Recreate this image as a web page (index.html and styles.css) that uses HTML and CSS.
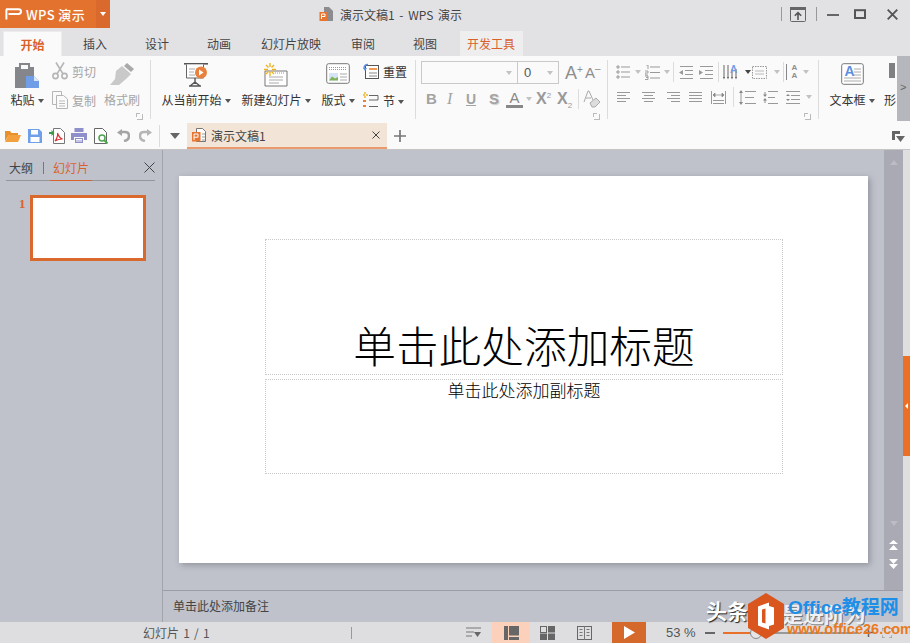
FILE: index.html
```html
<!DOCTYPE html>
<html lang="zh">
<head>
<meta charset="utf-8">
<title>演示文稿1 - WPS 演示</title>
<link rel="stylesheet" href="styles.css">
</head>
<body>
<div class="app">
  <header class="titlebar">
    <div class="brand">
      <svg class="ic brand-mark" width="17" height="12" viewBox="0 0 17 12"><path d="M1 1.200h12.500q2.500 0 2.500 2.400t-2.500 2.400H3.500M1.400 1.200V11.500" fill="none" stroke="#fff" stroke-width="2"/></svg>
      <span class="brand-name">WPS 演示</span>
    </div>
    <div class="brand-drop"><i class="caret caret-white"></i></div>
    <div class="doc-title">
      <svg class="ic" width="15" height="16" viewBox="0 0 15 16"><path d="M5 1h5l4 4v10H5z" fill="#8b8b90"/><rect x="0.500" y="6" width="8" height="9" fill="#e8752f"/><path d="M2.500 13V8h3.500v2.500H2.500" fill="none" stroke="#fff"/></svg>
      <span>演示文稿1 - WPS 演示</span>
    </div>
    <div class="win-ctrls">
      <i class="win-sep"></i>
      <svg class="ic" width="16" height="15" viewBox="0 0 16 15"><rect x=".5" y=".5" width="15" height="14" rx="1" fill="none" stroke="#666"/><rect x="0" y="0" width="16" height="3" fill="#666"/><path d="M8 13V6M4.800 8.800 8 5.600l3.200 3.200" fill="none" stroke="#555" stroke-width="1.600"/></svg>
      <i class="win-sep win-sep-b"></i>
      <svg class="ic win-min" width="12" height="12" viewBox="0 0 12 12"><rect y="6" width="12" height="2" fill="#666"/></svg>
      <svg class="ic win-max" width="12" height="10" viewBox="0 0 12 10"><rect x="1" y="1.200" width="10" height="7.800" fill="none" stroke="#555" stroke-width="2"/></svg>
      <svg class="ic win-close" width="11" height="11" viewBox="0 0 11 11"><path d="M.7.700l9.600 9.600M10.300.700.700 10.300" stroke="#555" stroke-width="1.900"/></svg>
    </div>
  </header>

  <nav class="tabs">
    <span class="tab tab-active">开始</span>
    <span class="tab">插入</span>
    <span class="tab">设计</span>
    <span class="tab">动画</span>
    <span class="tab tab-wide">幻灯片放映</span>
    <span class="tab">审阅</span>
    <span class="tab">视图</span>
    <span class="tab tab-dev">开发工具</span>
  </nav>

  <section class="ribbon">
    <div class="group g1">
      <div class="big w34">
        <div class="big-ic">
          <svg class="ic" width="24" height="25" viewBox="0 0 24 25"><path d="M0 4h4V0h11v4h4v21H0z" fill="#85868b"/><rect x="6" y="2" width="7" height="4" fill="#fafafa"/><path d="M11 13h8l5 5v7H11z" fill="#6f9de8"/><path d="M19 13v5h5" fill="#dbe6f8"/></svg>
        </div>
        <span class="lbl">粘贴<i class="caret"></i></span>
      </div>
      <div class="smalls ml8">
        <div class="small muted">
          <svg class="ic" width="16" height="18" viewBox="0 0 16 18"><g fill="none" stroke="#b5b5b5" stroke-width="1.600"><circle cx="3.500" cy="14" r="2.600"/><circle cx="12.500" cy="14" r="2.600"/><path d="M5 11.800 12 .5M11 11.800 4 .5"/></g></svg>
          <span>剪切</span>
        </div>
        <div class="small muted">
          <svg class="ic" width="16" height="18" viewBox="0 0 16 18"><g fill="#fafafa" stroke="#b5b5b5"><path d="M.5.500h9v13h-9z"/><path d="M4.500 4.500h7l4 3.500v9.500h-11z"/></g><path d="M7 10h6M7 12.500h6M7 15h6" stroke="#bdbdbd"/></svg>
          <span>复制</span>
        </div>
      </div>
      <div class="big w36 ml8 muted">
        <div class="big-ic">
          <svg class="ic" width="24" height="23" viewBox="0 0 24 23"><path d="M17 0l7 6-3 3-7-6z" fill="#a9a9a9"/><path d="M12 3l9 8-5 5L9 22H0l5-6 1-8z" fill="#c9c9c9"/></svg>
        </div>
        <span class="lbl">格式刷</span>
      </div>
      <i class="launcher l1"></i>
    </div>
    <i class="sep"></i>

    <div class="group g2">
      <div class="big w70">
        <div class="big-ic">
          <svg class="ic" width="24" height="24" viewBox="0 0 24 24"><path d="M0 .8h24" stroke="#555" stroke-width="1.600"/><path d="M2.500 1.500V15h17V1.500" fill="#fff" stroke="#666"/><path d="M5 6h6M5 9h5M5 12h6" stroke="#aaa"/><path d="M11 15v6M5 23h12M11 19l-5 4M11 19l5 4" stroke="#555" stroke-width="1.400" fill="none"/><circle cx="17" cy="9.500" r="6" fill="#e8813d"/><path d="M15 6.500v6l4.500-3z" fill="#fff"/></svg>
        </div>
        <span class="lbl">从当前开始<i class="caret"></i></span>
      </div>
      <div class="big w70 ml10">
        <div class="big-ic">
          <svg class="ic" width="24" height="24" viewBox="0 0 24 24"><path d="M1 8h22v15H1z" fill="#fff" stroke="#777"/><path d="M11 10h10" stroke="#999" stroke-dasharray="1 1"/><path d="M5 14h14M5 17h14M5 20h10" stroke="#aaa"/><path d="M6 0v4M6 9v4M0 6.500h4M8 6.500h4M2 2l2.500 2.500M10 2 7.500 4.500M2 11l2.500-2.500M10 11 7.500 8.500" stroke="#efb21f" stroke-width="1.400"/></svg>
        </div>
        <span class="lbl">新建幻灯片<i class="caret"></i></span>
      </div>
      <div class="big w34 ml10">
        <div class="big-ic">
          <svg class="ic" width="24" height="21" viewBox="0 0 24 21"><rect x=".7" y=".7" width="22.600" height="19.600" rx="2" fill="#fff" stroke="#777"/><path d="M3 4.500h18M3 6.500h18" stroke="#999" stroke-dasharray="1 1"/><rect x="3" y="10" width="9" height="7.500" fill="#d6e4f5"/><path d="M3 17.500l3-4 3 2 3-1.500v3.500z" fill="#7fb45c"/><path d="M14 11h7M14 14h7M14 17h7" stroke="#aaa"/></svg>
        </div>
        <span class="lbl">版式<i class="caret"></i></span>
      </div>
      <div class="smalls ml8 dark">
        <div class="small">
          <svg class="ic" width="16" height="16" viewBox="0 0 16 16"><rect x="2.500" y="2.500" width="13" height="13" fill="#fff" stroke="#555"/><path d="M6 6h8" stroke="#ee9a5b" stroke-width="2"/><path d="M6 10h8M6 13h8" stroke="#888"/><path d="M5 1.500Q1 1.500 1 5.500" fill="none" stroke="#5d8fe0" stroke-width="1.500"/><path d="M0 5h4L2 8z" fill="#5d8fe0"/></svg>
          <span>重置</span>
        </div>
        <div class="small">
          <svg class="ic" width="16" height="16" viewBox="0 0 16 16"><path d="M6 3.500h9v4.500H6M6 14.500h9" fill="none" stroke="#666"/><path d="M2 0v2M2 4v2M0 3h2M3 3h2" stroke="#efb21f" stroke-width="1.400"/><rect y="8" width="3" height="2" fill="#e8813d"/><rect y="13" width="3" height="2" fill="#e8813d"/></svg>
          <span>节<i class="caret"></i></span>
        </div>
      </div>
    </div>
    <i class="sep"></i>

    <div class="group g3">
      <div class="font-row">
        <div class="combo combo-name"><i class="caret caret-light"></i></div>
        <div class="combo combo-size"><span>0</span><i class="caret caret-light"></i></div>
        <span class="grow-a">A<sup>+</sup></span>
        <span class="shrink-a">A<sup>–</sup></span>
      </div>
      <div class="fmt-row">
        <b class="f fb">B</b>
        <i class="f fi">I</i>
        <span class="f fu">U</span>
        <span class="f fs">S</span>
        <span class="f fa">A</span><i class="caret caret-light"></i>
        <span class="f fx">X<sup>2</sup></span>
        <span class="f fx2">X<sub>2</sub></span>
        <i class="mini-sep"></i>
        <svg class="ic" width="18" height="18" viewBox="0 0 18 18"><path d="M1 12 5 1h1l4 9M3 8h5" fill="none" stroke="#aaa"/><path d="M7 13l6-5 4 4-5 5H9z" fill="#ddd" stroke="#aaa"/></svg>
      </div>
      <i class="launcher l3"></i>
    </div>
    <i class="sep"></i>

    <div class="group g4">
      <div class="para-row r1">
        <svg class="ic" width="14" height="14" viewBox="0 0 14 14"><path d="M5 2h9M5 7h9M5 12h9" stroke="#999"/><path d="M0 2h4M2 0v4M0 7h4M2 5v4M0 12h4M2 10v4" stroke="#999"/></svg>
        <i class="caret caret-light m5"></i>
        <svg class="ic m4" width="15" height="15" viewBox="0 0 15 15"><path d="M5 2h10M5 7.500h10M5 13h10" stroke="#999"/><path d="M1 0h2v4M0 6h3v2H0v2h3M0 11h3v3.500H0M1 12.500h2" fill="none" stroke="#999" stroke-width=".9"/></svg>
        <i class="caret caret-light m4"></i>
        <i class="mini-sep s-a"></i>
        <svg class="ic m5" width="14" height="13" viewBox="0 0 14 13"><path d="M1 .5h13M6 4.500h8M6 8.500h8M1 12.500h13" stroke="#999"/><path d="M0 6.500 4 4v5z" fill="#999"/></svg>
        <svg class="ic m6" width="14" height="13" viewBox="0 0 14 13"><path d="M1 .5h13M6 4.500h8M6 8.500h8M1 12.500h13" stroke="#999"/><path d="M4 6.500 0 4v5z" fill="#999"/></svg>
        <i class="mini-sep s-b"></i>
        <svg class="ic m4" width="16" height="15" viewBox="0 0 16 15"><path d="M1 0v13M5 0v13M9 4v9M13 4v9" stroke="#666"/><path d="M0 12h2l-1 2.500zM4 12h2l-1 2.500zM8 12h2l-1 2.500zM12 12h2l-1 2.500z" fill="#666"/><text x="7" y="8" class="svg-a">A</text></svg>
        <i class="caret caret-dark m6"></i>
        <svg class="ic m1" width="15" height="13" viewBox="0 0 15 13"><rect x=".5" y=".5" width="14" height="12" fill="none" stroke="#999" stroke-dasharray="1.500 1"/><path d="M3 5h9M3 8h9" stroke="#bbb"/></svg>
        <i class="caret caret-light m7"></i>
        <i class="mini-sep s-c"></i>
        <div class="stack-a m2"><span>A</span><span>A</span></div>
        <i class="caret caret-light m4"></i>
      </div>
      <div class="para-row r2">
        <svg class="ic" width="13" height="12" viewBox="0 0 13 12"><path d="M0 1.500h13M0 4.500h9M0 7.500h13M0 10.500h9" stroke="#999"/></svg>
        <svg class="ic a2" width="13" height="12" viewBox="0 0 13 12"><path d="M0 1.500h13M2 4.500h9M0 7.500h13M2 10.500h9" stroke="#999"/></svg>
        <svg class="ic a2" width="13" height="12" viewBox="0 0 13 12"><path d="M0 1.500h13M4 4.500h9M0 7.500h13M4 10.500h9" stroke="#999"/></svg>
        <svg class="ic a3" width="13" height="12" viewBox="0 0 13 12"><path d="M0 1.500h13M0 4.500h13M0 7.500h13M0 10.500h13" stroke="#999"/></svg>
        <svg class="ic a3" width="15" height="13" viewBox="0 0 15 13"><path d="M.5 0v13M14.500 0v13M2 9.500h11M2 12.500h11" stroke="#999"/><path d="M2 4h11M2 4l2-2v4zM13 4l-2-2v4z" stroke="#888" fill="#888" stroke-width=".7"/></svg>
        <i class="mini-sep s-d"></i>
        <svg class="ic a5" width="17" height="15" viewBox="0 0 17 15"><path d="M6 1.500h11M6 7.500h9M6 13.500h11" stroke="#999"/><path d="M2 2v11" stroke="#999"/><path d="M0 3l2-3 2 3zM0 12l2 3 2-3z" fill="#888"/></svg>
        <svg class="ic a6" width="15" height="15" viewBox="0 0 15 15"><path d="M5 1.500h10M5 7.500h7M5 13.500h10" stroke="#999"/><path d="M0 4.500h4L2 7zM0 10.500h4L2 8z" fill="#888"/><path d="M2 2v3M2 10v3" stroke="#888"/></svg>
        <svg class="ic a6b" width="14" height="13" viewBox="0 0 14 13"><path d="M0 .5h14M5 4.500h9M5 8.500h9M0 12.500h14" stroke="#999"/><path d="M0 5h4L2 3zM0 8h4L2 10z" fill="#888"/></svg>
        <i class="caret caret-light m6"></i>
      </div>
      <i class="launcher l4"></i>
    </div>
    <i class="sep"></i>

    <div class="group g5">
      <div class="big w46">
        <div class="big-ic">
          <svg class="ic" width="23" height="22" viewBox="0 0 23 22"><rect x=".7" y=".7" width="21.600" height="20.600" rx="2" fill="#fff" stroke="#777"/><text x="3.500" y="13" class="svg-a3">A</text><path d="M13 6h7M13 9h7M13 12h7M3 15h17M3 18h17" stroke="#aaa"/></svg>
        </div>
        <span class="lbl">文本框<i class="caret"></i></span>
      </div>
      <div class="big clip ml10">
        <div class="big-ic"><b class="shape-bar"></b></div>
        <span class="lbl">形</span>
      </div>
    </div>
    <div class="collapse-strip"><span>&gt;</span></div>
  </section>

  <section class="quick">
    <svg class="ic q0" width="16" height="12" viewBox="0 0 16 12"><path d="M0 1h5l1.500 2H13v2H4L0 11z" fill="#e8902c"/><path d="M3.500 5H16l-3 7H0z" fill="#f2a13c"/></svg>
    <svg class="ic q1" width="14" height="14" viewBox="0 0 14 14"><path d="M0 0h11l3 3v11H0z" fill="#6f9fe8"/><rect x="3" y="1" width="7" height="4.500" fill="#fff"/><rect x="2.500" y="8" width="9" height="5" fill="#fff"/></svg>
    <svg class="ic q2" width="16" height="16" viewBox="0 0 16 16"><path d="M4.500.5h7l4 4v11h-11z" fill="#fff" stroke="#777"/><path d="M6 13c2-2 3-6 2.500-8 1 3 2 5 5 6-3 0-5 .5-7.500 2z" fill="none" stroke="#d33" stroke-width="1.200"/><path d="M0 4h2.500V2l3 3-3 3V6H0z" fill="#3a9a4a"/></svg>
    <svg class="ic q3" width="16" height="15" viewBox="0 0 16 15"><path d="M3.500 0h9v4h-9z" fill="#8f8fc9"/><path d="M0 5h16v7h-3V9H3v3H0z" fill="#8f8fc9"/><path d="M4 10h8v5H4z" fill="#8f8fc9"/><path d="M5 11.500h6M5 13h6" stroke="#fff"/></svg>
    <svg class="ic q4" width="15" height="16" viewBox="0 0 15 16"><path d="M.5.500h8l4 4v11H.5z" fill="#fff" stroke="#666"/><circle cx="8" cy="10" r="3" fill="none" stroke="#4da64d" stroke-width="1.500"/><path d="M10 12l3.500 3.500" stroke="#4da64d" stroke-width="2"/></svg>
    <svg class="ic q5" width="13" height="13" viewBox="0 0 13 13"><path d="M4 3h4q4 0 4 4t-5 5" fill="none" stroke="#a5a5a5" stroke-width="2.500"/><path d="M5 0v7L0 3.500z" fill="#a5a5a5"/></svg>
    <svg class="ic q6" width="13" height="13" viewBox="0 0 13 13"><path d="M9 3H5Q1 3 1 7t5 5" fill="none" stroke="#b5b5b5" stroke-width="2.500"/><path d="M8 0v7l5-3.500z" fill="#b5b5b5"/></svg>
    <i class="quick-sep"></i>
    <i class="caret caret-big"></i>
    <div class="doc-tab">
      <svg class="ic" width="14" height="14" viewBox="0 0 14 14"><path d="M4.500.5h6l3 3v10h-9z" fill="#fff" stroke="#777"/><rect y="4" width="8.500" height="9.500" fill="#e8752f"/><path d="M2 12V6h4v3.200H2" fill="none" stroke="#fff"/><path d="M10 6h3M10 9h3M10 12h3" stroke="#999"/></svg>
      <span class="doc-tab-name">演示文稿1</span>
      <svg class="ic doc-tab-x" width="8" height="8" viewBox="0 0 8 8"><path d="M.5.500l7 7M7.500.500l-7 7" stroke="#444"/></svg>
    </div>
    <svg class="ic q-plus" width="12" height="12" viewBox="0 0 12 12"><path d="M6 0v12M0 6h12" stroke="#777" stroke-width="1.700"/></svg>
    <svg class="ic q-end" width="13" height="12" viewBox="0 0 13 12"><path d="M0 0h8v3H3v6H0z" fill="#666"/><path d="M4 5h9l-4.500 6z" fill="#666"/></svg>
  </section>

  <main class="workspace">
    <aside class="sidebar">
      <div class="side-tabs">
        <span class="side-tab">大纲</span>
        <i class="side-sep"></i>
        <span class="side-tab side-on">幻灯片</span>
        <svg class="ic side-x" width="11" height="11" viewBox="0 0 11 11"><path d="M.5.500l10 10M10.500.500l-10 10" stroke="#444"/></svg>
      </div>
      <div class="thumb-row">
        <span class="thumb-num">1</span>
        <div class="thumb"></div>
      </div>
    </aside>
    <div class="center">
      <div class="edit-row">
        <div class="canvas">
          <div class="slide">
            <div class="ph ph-title">单击此处添加标题</div>
            <div class="ph ph-sub">单击此处添加副标题</div>
          </div>
        </div>
        <div class="vscroll">
          <i class="tri tri-up"></i>
          <i class="tri tri-down"></i>
          <svg class="ic dbl" width="9" height="10" viewBox="0 0 9 10"><path d="M4.500 0 9 4H0zM4.500 5 9 10H0z" fill="#fff"/></svg>
          <svg class="ic dbl2" width="9" height="10" viewBox="0 0 9 10"><path d="M4.500 5 9 0H0zM4.500 10 9 5H0z" fill="#fff"/></svg>
        </div>
      </div>
      <div class="notes">单击此处添加备注</div>
    </div>
    <div class="rail">
      <div class="rail-handle"><i></i></div>
    </div>
  </main>

  <footer class="status">
    <span class="st-page">幻灯片 1 / 1</span>
    <i class="st-sep"></i>
    <svg class="ic st-notes" width="15" height="11" viewBox="0 0 15 11"><path d="M0 1h15M0 5h8M0 9h6" stroke="#777"/><path d="M8 5h7l-3.500 5z" fill="#666"/></svg>
    <div class="st-view">
      <svg class="ic" width="15" height="14" viewBox="0 0 15 14"><rect width="4" height="14" fill="#666"/><rect x="5" width="10" height="9.500" fill="#666"/><rect x="5" y="11" width="10" height="3" fill="#666"/></svg>
    </div>
    <svg class="ic st-grid" width="15" height="14" viewBox="0 0 15 14"><rect x=".5" y=".5" width="6" height="6" fill="none" stroke="#666"/><rect x="8" width="7" height="6.500" fill="#666"/><rect y="7.500" width="7" height="6.500" fill="#666"/><rect x="8" y="7.500" width="7" height="6.500" fill="#666"/></svg>
    <svg class="ic st-read" width="15" height="14" viewBox="0 0 15 14"><rect x=".5" y=".5" width="14" height="13" fill="none" stroke="#666"/><path d="M7.500 0v14M2.500 3.500h3M2.500 6.500h3M2.500 9.500h3M9.500 3.500h3M9.500 6.500h3M9.500 9.500h3" stroke="#777"/></svg>
    <div class="st-play"><svg class="ic" width="11" height="13" viewBox="0 0 11 13"><path d="M0 0v13l11-6.500z" fill="#fff"/></svg></div>
    <span class="st-zoom">53 %</span>
    <i class="st-minus"></i>
    <div class="slider"><i class="slider-on"></i><i class="slider-knob"></i></div>
    <svg class="ic st-plus" width="9" height="9" viewBox="0 0 9 9"><path d="M4.500 0v9M0 4.500h9" stroke="#666" stroke-width="1.500"/></svg>
    <svg class="ic st-fit" width="10" height="10" viewBox="0 0 10 10"><path d="M0 3V0h3M7 0h3v3M0 7v3h3M7 10h3V7" fill="none" stroke="#888"/></svg>
  </footer>

  <div class="watermark">
    <span class="wm-head">头条</span>
    <span class="wm-tail">是进阶为</span>
    <svg class="wm-logo" width="36" height="46" viewBox="0 0 36 46"><path d="M18 0l18 11v24L18 46 0 35V11z" fill="#d9561f"/><path d="M10 13.500 21 9.500v27l-11-4zM21 13v20l5-1.500v-17z" fill="#fff"/><path d="M14 16.500l3.500-1v15l-3.500-1z" fill="#d9561f"/></svg>
    <span class="wm-blue">Office教程网</span>
    <span class="wm-url">www.office26.com</span>
  </div>
</div>
</body>
</html>
```

FILE: styles.css
```css
* { box-sizing: border-box; }
html, body { margin: 0; padding: 0; }
body {
  width: 910px; height: 643px; overflow: hidden;
  font-family: "Noto Sans CJK SC", "Liberation Sans", sans-serif;
  font-size: 12px; color: #333; background: #e2e2e4;
}
i { font-style: normal; }
.app { position: relative; width: 910px; height: 643px; display: flex; flex-direction: column; overflow: hidden; }
.ic { display: block; flex: none; }

/* carets */
.caret { display: inline-block; width: 0; height: 0; border-left: 3.500px solid transparent; border-right: 3.500px solid transparent; border-top: 4px solid #555; margin-left: 3px; vertical-align: 2px; flex: none; }
.caret-white { border-top-color: #fff; margin: 0; }
.caret-light { border-top-color: #c2c2c2; }
.caret-dark { border-top-color: #444; }
.caret-big { border-left-width: 5px; border-right-width: 5px; border-top: 6px solid #666; margin: 0 0 0 10px; }

/* title bar */
.titlebar { height: 31px; display: flex; align-items: flex-start; flex: none; background: #e2e2e4; }
.brand { width: 96px; height: 28px; background: #e4722f; display: flex; align-items: center; padding-left: 5px; color: #fff; }
.brand-name { margin-left: 4px; font-size: 13px; font-weight: 500; letter-spacing: .4px; white-space: nowrap; }
.brand-drop { width: 14px; height: 28px; background: #d9692c; display: flex; align-items: center; justify-content: center; }
.doc-title { margin-left: 209px; height: 28px; width: 150px; display: flex; align-items: center; gap: 6px; color: #444; white-space: nowrap; word-spacing: 2px; }
.win-ctrls { margin-left: 312px; height: 28px; display: flex; align-items: center; }
.win-sep { width: 1px; height: 14px; background: #999; margin-right: 8px; }
.win-sep-b { margin: 0 0 0 10px; }
.win-min { margin-left: 10px; }
.win-max { margin-left: 15px; }
.win-close { margin-left: 21px; }

/* tabs */
.tabs { height: 25px; display: flex; flex: none; padding-left: 3px; background: #e2e2e4; }
.tab { height: 25px; line-height: 25px; padding: 0 19px; color: #444; white-space: nowrap; }
.tab-active { width: 59px; padding: 0; text-align: center; margin-right: 2px; background: #fafafa; color: #d9622a; font-weight: 700; border: 1px solid #ececec; border-bottom: 0; }
.tab-wide { padding: 0 11px; }
.tab-dev { margin-left: 4px; padding: 0 8px 0 7px; background: #eeeeef; color: #d9622a; }

/* ribbon */
.ribbon { height: 66px; display: flex; flex: none; align-items: flex-start; background: #fafafa; position: relative; }
.group { position: relative; height: 66px; display: flex; flex: none; }
.sep { width: 1px; height: 59px; margin-top: 4px; background: #dcdcdc; flex: none; }
.g1 { width: 150px; padding-left: 10px; }
.g2 { width: 264px; padding-left: 10px; }
.g3 { width: 191px; flex-direction: column; padding-left: 5px; }
.g4 { width: 210px; flex-direction: column; padding-left: 8px; }
.g5 { width: 78px; padding-left: 10px; overflow: hidden; }
.big { display: flex; flex-direction: column; align-items: center; padding-top: 7px; flex: none; white-space: nowrap; }
.big-ic { height: 30px; flex: none; }
.lbl { line-height: 14px; height: 14px; display: block; white-space: nowrap; }
.w34 { width: 34px; } .w36 { width: 36px; } .w46 { width: 46px; } .w70 { width: 70px; }
.ml8 { margin-left: 8px; } .ml10 { margin-left: 10px; }
.muted { color: #a5a5a5; }
.smalls { display: flex; flex-direction: column; gap: 11px; padding-top: 6px; flex: none; }
.small { display: flex; align-items: center; gap: 4px; height: 18px; white-space: nowrap; }
.launcher { position: absolute; width: 6px; height: 6px; border: 1px solid #bbb; border-top: 0; border-left: 0; box-shadow: -2px -2px 0 -1px #bbb; }
.l1 { left: 137px; top: 58px; }
.l3 { left: 178px; top: 58px; }
.l4 { left: 197px; top: 58px; }
.clip { width: 12px; align-items: flex-start; margin-left: 9px; }
.shape-bar { display: block; width: 6px; height: 15px; background: #808083; margin-left: 5px; }
.collapse-strip { position: absolute; left: 897px; top: 0; width: 13px; height: 65px; background: #b5b7bd; color: #666; line-height: 14px; padding: 24px 0 0 3px; font-size: 11px; font-family: "Liberation Sans", sans-serif; }

.font-row { display: flex; align-items: center; height: 23px; margin-top: 5px; }
.combo { height: 23px; border: 1px solid #c9c9c9; display: flex; align-items: center; justify-content: flex-end; padding-right: 5px; flex: none; }
.combo-name { width: 97px; }
.combo-size { width: 41px; border-left: 0; justify-content: space-between; padding-left: 6px; color: #555; font-family: "Liberation Sans", sans-serif; font-size: 13px; }
.grow-a, .shrink-a { color: #8e8e8e; font-family: "Liberation Sans", sans-serif; line-height: 20px; flex: none; }
.grow-a { font-size: 18px; margin-left: 6px; width: 20px; }
.shrink-a { font-size: 15px; width: 18px; }
.grow-a sup, .shrink-a sup { font-size: 10px; vertical-align: 6px; line-height: 0; }
.fmt-row { display: flex; align-items: center; height: 18px; margin-top: 6px; padding-left: 5px; color: #a3a3a3; font-family: "Liberation Sans", sans-serif; }
.f { font-size: 15px; line-height: 18px; flex: none; }
.fb { width: 21px; font-weight: 700; }
.fi { width: 19px; font-family: "Liberation Serif", serif; font-size: 16px; font-style: italic; }
.fu { width: 23px; text-decoration: underline; font-weight: 700; font-size: 14px; }
.fs { width: 17px; font-weight: 700; text-shadow: 1px 1px 1px #ccc; }
.fa { width: 17px; color: #888; border-bottom: 3px solid #888; text-align: center; height: 18px; line-height: 15px; }
.fx { width: 21px; margin-left: 4px; font-weight: 700; font-size: 16px; color: #999; }
.fx2 { width: 21px; font-weight: 700; font-size: 16px; color: #999; }
.fx sup, .fx2 sub { font-size: 8px; line-height: 0; font-weight: 400; }
.mini-sep { width: 1px; height: 20px; background: #dcdcdc; flex: none; margin: 0 4px 0 0; }

.para-row { display: flex; align-items: center; flex: none; }
.r1 { height: 18px; margin-top: 7px; }
.r2 { height: 20px; margin-top: 6px; padding-left: 1px; }
.m1 { margin-left: 1px; } .m2 { margin-left: 2px; } .m4 { margin-left: 4px; } .m5 { margin-left: 5px; } .m6 { margin-left: 6px; } .m7 { margin-left: 7px; }
.s-a { margin: 0 0 0 3px; }
.s-b { margin: 0 0 0 5px; }
.s-c { margin: 0 0 0 3px; }
.s-d { margin: 0 0 0 7px; }
.a2 { margin-left: 12px; } .a3 { margin-left: 9px; }
.a5 { margin-left: 5px; } .a6 { margin-left: 7px; } .a6b { margin-left: 8px; }
.svg-a { font: 700 10px "Liberation Sans", sans-serif; fill: #6f9de8; }
.svg-a3 { font: 700 14px "Liberation Sans", sans-serif; fill: #5d8fe0; }
.stack-a { width: 13px; height: 16px; flex: none; display: flex; flex-direction: column; align-items: center; padding-left: 3px; border-left: 1px solid #888; font: 700 8px/8px "Liberation Sans", sans-serif; color: #8e8e8e; }

/* quick access row */
.quick { height: 28px; display: flex; align-items: center; flex: none; background: #fafafa; border-bottom: 1px solid #c5c5c5; padding-left: 5px; position: relative; }
.q1 { margin-left: 7px; } .q2 { margin-left: 7px; } .q3 { margin-left: 6px; } .q4 { margin-left: 7px; }
.q5 { margin-left: 8px; } .q6 { margin-left: 9px; }
.quick-sep { width: 1px; height: 22px; background: #dcdcdc; margin-left: 7px; }
.doc-tab { width: 200px; height: 26px; margin-left: 7px; align-self: flex-end; display: flex; align-items: center; padding-left: 5px; background: #f2e5d7; border-bottom: 2px solid #ea9a6e; color: #444; }
.doc-tab-name { margin-left: 5px; }
.doc-tab-x { margin-left: auto; margin-right: 7px; }
.q-plus { margin-left: 7px; }
.q-end { margin-left: auto; margin-right: 5px; margin-top: 3px; }

/* workspace */
.workspace { height: 472px; display: flex; flex: none; background: #bfc2cb; }
.sidebar { width: 163px; flex: none; border-right: 1px solid #a2a4ab; padding: 9px 0 0 6px; }
.side-tabs { width: 149px; height: 22px; border-bottom: 1px solid #94969c; display: flex; align-items: center; position: relative; }
.side-tab { height: 21px; line-height: 18px; padding: 0 3px; color: #444; }
.side-sep { width: 1px; height: 12px; background: #777; margin: -2px 7px 2px 7px; }
.side-on { color: #d9622a; padding: 0 3px; margin-left: -1px; width: 42px; border-bottom: 1px solid #d9622a; margin-bottom: -1px; height: 22px; }
.side-x { margin-left: auto; margin-right: 0; margin-top: -5px; }
.thumb-row { display: flex; margin-top: 14px; }
.thumb-num { width: 24px; padding-left: 13px; font: 700 13px "Liberation Serif", serif; color: #d9622a; line-height: 15px; padding-top: 1px; }
.thumb { width: 116px; height: 66px; background: #fff; border: 3px solid #d9692c; }
.center { flex: 1; display: flex; flex-direction: column; min-width: 0; }
.edit-row { height: 440px; display: flex; flex: none; }
.canvas { flex: 1; padding: 26px 0 0 16px; }
.slide { width: 689px; height: 387px; background: #fff; box-shadow: 2px 2px 6px rgba(60,60,70,.35); padding: 63px 0 0 86px; }
.ph { width: 518px; border: 1px dotted #c9c9c9; color: #000; text-align: center; font-family: "Noto Sans CJK SC", "Liberation Serif", serif; font-weight: 300; }
.ph-title { height: 136px; font-size: 42.700px; line-height: 60px; padding-top: 74px; white-space: nowrap; }
.ph-sub { height: 95px; margin-top: 4px; font-size: 17px; line-height: 20px; }
.vscroll { width: 19px; flex: none; background: #a9aab4; display: flex; flex-direction: column; align-items: center; position: relative; }
.tri { width: 0; height: 0; border-left: 4.500px solid transparent; border-right: 4.500px solid transparent; }
.tri-up { border-bottom: 5px solid #bcbcc4; margin-top: 10px; }
.tri-down { border-top: 5px solid #bcbcc4; margin-top: 356px; }
.dbl { margin-top: 14px; }
.dbl2 { margin-top: 9px; }
.notes { height: 32px; border-top: 1px solid #9b9da4; padding-left: 10px; line-height: 30px; color: #444; background: #bfc2cb; }
.rail { width: 7px; flex: none; background: #dfdfe0; padding-top: 206px; }
.rail-handle { width: 7px; height: 100px; background: #ec6f26; display: flex; align-items: center; justify-content: center; }
.rail-handle i { width: 0; height: 0; border-top: 3px solid transparent; border-bottom: 3px solid transparent; border-right: 3px solid #fff; }

/* status */
.status { height: 21px; flex: none; display: flex; align-items: center; background: #dedee0; position: relative; color: #555; }
.st-page { margin-left: 143px; width: 70px; white-space: nowrap; word-spacing: 1.500px; }
.st-sep { width: 1px; height: 12px; background: #999; margin-left: 138px; }
.st-notes { margin-left: 114px; }
.st-view { width: 38px; height: 21px; margin-left: 11px; background: #fbd1bc; display: flex; align-items: center; justify-content: center; }
.st-grid { margin-left: 10px; }
.st-read { margin-left: 22px; }
.st-play { width: 34px; height: 21px; margin-left: 20px; background: #d5692c; display: flex; align-items: center; justify-content: center; }
.st-zoom { margin-left: 20px; width: 39px; font-family: "Liberation Sans", sans-serif; font-size: 13px; white-space: nowrap; }
.st-minus { width: 10px; height: 2px; background: #666; }
.slider { width: 134px; height: 2px; margin-left: 8px; background: #999; position: relative; }
.slider-on { display: block; width: 28px; height: 2px; background: #e8702a; }
.slider-knob { position: absolute; left: 27px; top: -5px; width: 12px; height: 12px; border-radius: 50%; background: #e6e6e8; border: 1px solid #888; }
.st-plus { margin-left: 7px; }
.st-fit { margin-left: 9px; }

/* watermark */
.watermark { position: absolute; left: 700px; top: 590px; width: 210px; height: 53px; }
.wm-head, .wm-tail { position: absolute; top: 7px; font-size: 21px; line-height: 26px; font-weight: 700; color: #fff; text-shadow: 1px 1px 1px #222; white-space: nowrap; }
.wm-head { left: 6px; }
.wm-tail { left: 82px; top: 10px; color: #eef0f3; text-shadow: 1px 1px 0 #777; }
.wm-logo { position: absolute; left: 48px; top: 3px; }
.wm-blue { position: absolute; left: 88px; top: 5px; font-size: 19px; line-height: 26px; font-weight: 700; color: #1d8fe8; white-space: nowrap; font-family: "Liberation Sans", "Noto Sans CJK SC", sans-serif; }
.wm-url { position: absolute; left: 87px; top: 30px; font-size: 14.500px; line-height: 18px; font-weight: 700; color: #ea7a1e; white-space: nowrap; font-family: "Liberation Sans", sans-serif; }
```
